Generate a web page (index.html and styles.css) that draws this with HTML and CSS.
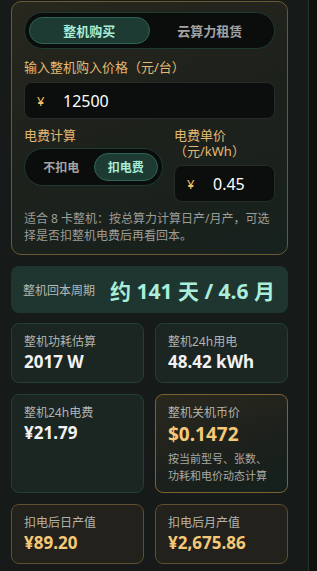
FILE: index.html
```
<!DOCTYPE html>
<html lang="zh-CN">
<head>
    <meta charset="UTF-8">
    <meta name="viewport" content="width=device-width, initial-scale=1.0">
    <title>整机回本计算</title>
    <link rel="stylesheet" href="styles.css">
</head>
<body>
    <div class="page">
        <div class="panel">
            <div class="tabs">
                <button class="tab active">整机购买</button>
                <button class="tab">云算力租赁</button>
            </div>

            <div class="label">输入整机购入价格（元/台）</div>
            <div class="input-box">
                <span class="currency">¥</span>
                <span class="input-value">12500</span>
            </div>

            <div class="power-row">
                <div class="power-col">
                    <div class="label">电费计算</div>
                    <div class="switch">
                        <button class="switch-btn">不扣电</button>
                        <button class="switch-btn active">扣电费</button>
                    </div>
                </div>
                <div class="price-col">
                    <div class="label">电费单价（元/kWh）</div>
                    <div class="input-box small">
                        <span class="currency">¥</span>
                        <span class="input-value">0.45</span>
                    </div>
                </div>
            </div>

            <p class="note">适合 8 卡整机：按总算力计算日产/月产，可选择是否扣整机电费后再看回本。</p>
        </div>

        <div class="payback">
            <span class="payback-label">整机回本周期</span>
            <span class="payback-value">约 141 天 / 4.6 月</span>
        </div>

        <div class="stats">
            <div class="stat">
                <div class="stat-label">整机功耗估算</div>
                <div class="stat-value">2017 W</div>
            </div>
            <div class="stat">
                <div class="stat-label">整机24h用电</div>
                <div class="stat-value">48.42 kWh</div>
            </div>
            <div class="stat">
                <div class="stat-label">整机24h电费</div>
                <div class="stat-value">¥21.79</div>
            </div>
            <div class="stat gold highlight">
                <div class="stat-label">整机关机币价</div>
                <div class="stat-value big">$0.1472</div>
                <div class="stat-note">按当前型号、张数、功耗和电价动态计算</div>
            </div>
            <div class="stat gold">
                <div class="stat-label">扣电后日产值</div>
                <div class="stat-value">¥89.20</div>
            </div>
            <div class="stat gold">
                <div class="stat-label">扣电后月产值</div>
                <div class="stat-value">¥2,675.86</div>
            </div>
        </div>
    </div>
</body>
</html>
```

FILE: styles.css
```
* {
    box-sizing: border-box;
}

html {
    background-color: #0e1110;
}

body {
    margin: 0;
    font-family: "Noto Sans", "Noto Sans CJK SC", sans-serif;
    color: #e8e8e8;
}

.page {
    width: 309px;
    min-height: 571px;
    padding: 1px 20px 10px 11px;
    background-color: #161a19;
    border-right: 1px solid #2c312f;
}

.panel {
    border: 1px solid #6a5932;
    border-radius: 10px;
    padding: 10px 12px 10px;
    background: linear-gradient(160deg, #27271d 0%, #1d211c 50%, #17211d 100%);
}

.tabs {
    display: flex;
    height: 37px;
    padding: 4px;
    background-color: #0a0d0c;
    border: 1px solid #1d3a33;
    border-radius: 19px;
}

.tab {
    flex: 1;
    border: 1px solid transparent;
    border-radius: 14px;
    background: none;
    font-family: inherit;
    font-size: 13px;
    font-weight: bold;
    color: #a3a3a3;
    padding: 0;
}

.tab.active {
    background-color: #1d3a33;
    border-color: #2d6656;
    color: #a8ecd6;
}

.label {
    font-size: 13px;
    color: #e3b873;
    line-height: 16px;
    margin-top: 10px;
}

.input-box {
    display: flex;
    align-items: center;
    height: 37px;
    margin-top: 7px;
    padding: 0 12px;
    background-color: #0b0e0d;
    border: 1px solid #262c29;
    border-radius: 8px;
}

.currency {
    color: #f2c166;
    font-size: 13px;
    width: 26px;
}

.input-value {
    color: #ffffff;
    font-size: 16px;
}

.power-row {
    display: flex;
    align-items: flex-start;
    gap: 11px;
}

.power-row .label {
    margin-top: 8px;
}

.power-col {
    width: 139px;
}

.price-col {
    flex: 1;
}

.price-col .label {
    padding-right: 20px;
}

.input-box.small {
    margin-top: 6px;
}

.switch {
    display: flex;
    height: 38px;
    margin-top: 5px;
    padding: 4px;
    background-color: #0a0d0c;
    border: 1px solid #1d3a33;
    border-radius: 19px;
}

.switch-btn {
    flex: 1;
    padding: 0;
    border: 1px solid transparent;
    border-radius: 14px;
    background: none;
    font-family: inherit;
    font-size: 12px;
    font-weight: bold;
    color: #a3a3a3;
}

.switch-btn.active {
    background-color: #1d3a33;
    border-color: #2d6656;
    color: #a8ecd6;
}

.note {
    margin: 9px 0 0;
    font-size: 12px;
    line-height: 16.5px;
    color: #9d9d98;
}

.payback {
    display: flex;
    align-items: center;
    gap: 15px;
    height: 47px;
    margin-top: 11px;
    padding: 0 12px;
    background-color: #1f3530;
    border-radius: 8px;
}

.payback-label {
    font-size: 12px;
    color: #b3b8b5;
}

.payback-value {
    font-size: 21px;
    font-weight: bold;
    color: #a8eedb;
}

.stats {
    display: grid;
    grid-template-columns: 1fr 1fr;
    gap: 11px;
    margin-top: 10px;
}

.stat {
    min-height: 60px;
    padding: 9px 12px 8px;
    border: 1px solid #233f37;
    border-radius: 8px;
    background-color: #1b2522;
}

.stat.gold {
    border-color: #5f4f2e;
    background-color: #22211b;
}

.stat.highlight {
    border-color: #7a6431;
    background: linear-gradient(160deg, #2a281d 0%, #1c201c 60%, #14201c 100%);
}

.stat-label {
    font-size: 12px;
    color: #b3b3ae;
    line-height: 17px;
}

.stat-value {
    margin-top: 1px;
    font-size: 17px;
    line-height: 22px;
    font-weight: bold;
    color: #f2f2f2;
}

.stat.gold .stat-value {
    color: #f5c978;
}

.stat-value.big {
    font-size: 19px;
    line-height: 25px;
}

.stat-note {
    margin-top: 3px;
    font-size: 11px;
    line-height: 17px;
    color: #a9a9a4;
}
```
